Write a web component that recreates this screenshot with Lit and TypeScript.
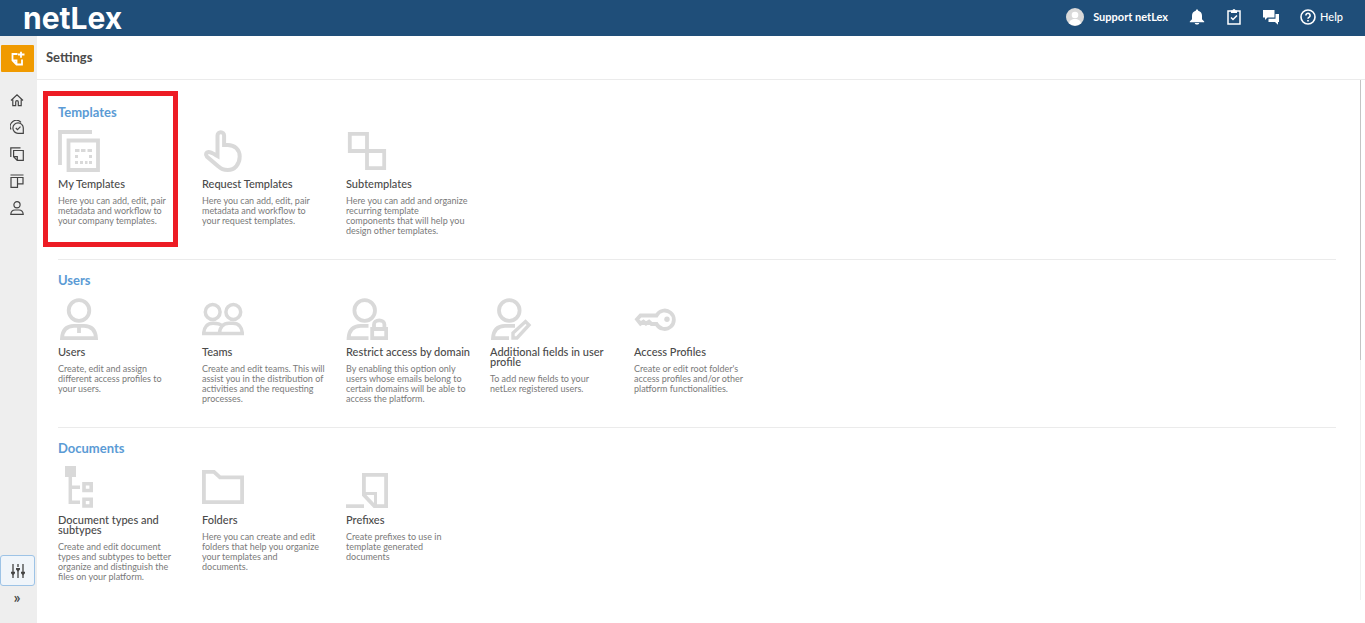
import { LitElement, html, css, svg } from "lit";
import { customElement } from "lit/decorators.js";

interface Card {
  title: string;
  text: string;
  icon: unknown;
}
interface Group {
  name: string;
  cards: Card[];
  marked?: boolean;
}

const cardIcons = {
  templates: svg`<path d="M2 35V2H34"/><path d="M10.500 10.500H40V40H10.500Z"/><path stroke-width="3" d="M17 20.500h4.500M23 20.500h4.500M29.500 20.500H34M17 32.500h3M22 32.500h3M27 32.500h2.500M31 32.500h3M17 26.500h3M31 26.500h3"/>`,
  hand: svg`<path stroke-width="4" d="M15.500 26V5.500a3.200 3.200 0 0 1 6.600 0V15h3.600c7 0 12 4.600 12 11.600 0 7.400-4.800 13.400-12 13.400-4 0-6.800-1-9.300-3.600L4.800 26.500c-1.700-1.900-.6-4.300 1.700-4.500 2.300-.1 5.500 2 9 4z"/>`,
  blocks: svg`<path d="M3.800 3.800H21V21H3.800ZM21 21H38.200V38.200H21Z"/>`,
  user: svg`<circle cx="21" cy="12.500" r="10.300"/><path d="M4 40.200H38C37.500 32 33 27.800 26 27.800H16C9 27.800 4.500 32 4 40.200ZM21 28v7"/>`,
  team: svg`<g stroke-width="3.500"><circle cx="10.700" cy="14" r="7.400"/><circle cx="31.300" cy="14" r="7.400"/><path d="M17 35.400H1.700C2 29 5.500 25.200 11 25.200c5 0 7 .5 9 2.500M17.500 35.400H40.300C40 29 36.500 25.200 31 25.200h-4C21.500 25.200 17.800 29 17.500 35.400Z"/></g>`,
  lock: svg`<circle cx="18.700" cy="12.500" r="10.300"/><path d="M22.500 40.200H2.600C3 32 7.500 27.800 14.500 27.800h8"/><path d="M26.200 31H40.200V40.200H26.200ZM28 30v-3.500a5.200 4.200 0 0 1 10.400 0V30"/>`,
  pencil: svg`<circle cx="19.300" cy="12.500" r="10.300"/><path d="M19 40.200H3C3.500 32 8 27.800 15 27.800h10"/><path stroke-width="3.400" d="M23 40v-5L35.500 23.500 39 27 27 40Z"/>`,
  key: svg`<path stroke-width="3.800" d="M22.500 17.500H6.500L3 21.300l3.500 4.400 3-2 2.500 2 3-2 2.500 2.300h5A9.200 9.200 0 1 0 22.500 17.500Z"/><circle class="solid" cx="33" cy="21.300" r="2.700"/>`,
  tree: svg`<path class="solid" d="M7 0H18V11H7Z"/><path stroke-width="3.500" d="M12.300 10V36.200H22M12.300 21.300H22"/><path stroke-width="3.600" d="M26 17.800H33.200V24.500H26ZM26 33.200H33.200V40H26Z"/>`,
  folder: svg`<path stroke-width="3.800" d="M1.900 5.800H12L18 11.300H40.100V36.200H1.900Z"/>`,
  prefix: svg`<path d="M0 40.200H18"/><path stroke-width="3.800" d="M17.900 8.800H40.100V40.200H28.500L17.900 29Z"/><path stroke-width="3" d="M17 27.500H29.500V40"/>`,
};

// "\n" in a description is a line break on the card.
const groups: Group[] = [
  {
    name: "Templates",
    marked: true,
    cards: [
      { title: "My Templates", text: "Here you can add, edit, pair\nmetadata and workflow to\nyour company templates.", icon: cardIcons.templates },
      { title: "Request Templates", text: "Here you can add, edit, pair\nmetadata and workflow to\nyour request templates.", icon: cardIcons.hand },
      { title: "Subtemplates", text: "Here you can add and organize\nrecurring template\ncomponents that will help you\ndesign other templates.", icon: cardIcons.blocks },
    ],
  },
  {
    name: "Users",
    cards: [
      { title: "Users", text: "Create, edit and assign\ndifferent access profiles to\nyour users.", icon: cardIcons.user },
      { title: "Teams", text: "Create and edit teams. This will\nassist you in the distribution of\nactivities and the requesting\nprocesses.", icon: cardIcons.team },
      { title: "Restrict access by domain", text: "By enabling this option only\nusers whose emails belong to\ncertain domains will be able to\naccess the platform.", icon: cardIcons.lock },
      { title: "Additional fields in user profile", text: "To add new fields to your\nnetLex registered users.", icon: cardIcons.pencil },
      { title: "Access Profiles", text: "Create or edit root folder's\naccess profiles and/or other\nplatform functionalities.", icon: cardIcons.key },
    ],
  },
  {
    name: "Documents",
    cards: [
      { title: "Document types and subtypes", text: "Create and edit document\ntypes and subtypes to better\norganize and distinguish the\nfiles on your platform.", icon: cardIcons.tree },
      { title: "Folders", text: "Here you can create and edit\nfolders that help you organize\nyour templates and\ndocuments.", icon: cardIcons.folder },
      { title: "Prefixes", text: "Create prefixes to use in\ntemplate generated\ndocuments", icon: cardIcons.prefix },
    ],
  },
];

const navIcons = [
  { label: "Home", icon: svg`<path d="M1 7.500 7 1.800l6 5.700M2.800 6.500v6.200h2.900V9a1.300 1.300 0 0 1 2.600 0v3.700h2.900V6.500"/>` },
  { label: "Approvals", icon: svg`<path d="M1 9.500A6.200 6.200 0 0 1 11 2.300M13.300 13.300H8A5.200 5.200 0 1 1 13.300 8ZM5.800 8l1.700 1.600 3-3"/>` },
  { label: "Documents", icon: svg`<path d="M.8 10V.8H10.500M3.600 3.500H13.300V13.300H7.200L3.600 9.700ZM3.600 9.600H7.300V13.200"/>` },
  { label: "Boards", icon: svg`<path d="M.5 1H13.500M1 3.500H7.500V13.300H1ZM7.500 3.500H13V9.800H7.500"/>` },
  { label: "People", icon: svg`<circle cx="7" cy="3.800" r="3.100"/><path d="M.8 13.300C1 10.500 2.500 9 5 9h4c2.500 0 4 1.500 4.200 4.300Z"/>` },
];

@customElement("app-root")
export class AppRoot extends LitElement {
  static styles = css`
    :host {
      display: flex;
      flex-direction: column;
      min-height: 100vh;
      background: #fff;
      color: #4a4a4a;
      font-family: Lato, "Liberation Sans", sans-serif;
    }
    * { box-sizing: border-box; }
    h1, h2, h3, p { margin: 0; }
    a { color: inherit; text-decoration: none; }
    button { border: 0; padding: 0; background: none; font: inherit; color: inherit; }
    svg { display: block; fill: none; stroke: currentColor; }
    .solid { fill: currentColor; stroke: none; }
    .disc { fill: #d9d9d9; stroke: none; }

    .top {
      display: flex;
      align-items: center;
      justify-content: space-between;
      height: 36px;
      padding: 0 22px 0 23px;
      background: #1f4e79;
      color: #fff;
    }
    .logo { font-family: Inter, Lato, sans-serif; font-size: 30px; line-height: 36px; font-weight: 700; }
    .tools { display: flex; align-items: center; gap: 21px; padding-bottom: 3px; font-size: 11px; line-height: 16px; }
    .account { display: flex; align-items: center; gap: 9px; font-weight: 700; }
    .help { display: flex; align-items: center; gap: 4px; font-weight: 500; }

    .body { display: flex; flex: 1; }
    .side {
      display: flex;
      flex-direction: column;
      align-items: center;
      width: 37px;
      padding: 9px 3px 18px 0;
      background: #eee;
      color: #444;
    }
    .create {
      display: grid;
      place-items: center;
      width: 33px;
      height: 27px;
      margin: 0 0 21px 1px;
      border-radius: 1px;
      background: #f09a00;
      color: #fff;
    }
    .nav { display: flex; flex-direction: column; gap: 13px; flex: 1; }
    .nav a { display: block; }
    .config {
      display: grid;
      place-items: center;
      width: 35px;
      height: 31px;
      padding-left: 2px;
      border: 1px solid #9dc3e6;
      border-radius: 3px;
      background: #f0f5fa;
      margin-bottom: 3px;
    }
    .more { font-size: 16px; line-height: 16px; font-weight: 600; }

    .main { flex: 1; min-width: 0; display: flex; flex-direction: column; }
    .title {
      height: 44px;
      padding: 0 9px;
      border-bottom: 1px solid #ebebeb;
      font-size: 13px;
      line-height: 42px;
      font-weight: 700;
    }
    .scroll { display: flex; flex: 1; margin-bottom: 23px; padding-right: 4px; }
    .groups { flex: 1; padding: 12px 24px 0 21px; }
    .rail { width: 1px; background: #f0f0f0; }
    .thumb { height: 280px; background: #c4c4c4; }

    .group { position: relative; padding: 11px 0 23px; border-bottom: 1px solid #ebebeb; }
    .group:last-child { border-bottom: 0; padding-bottom: 0; }
    .name { margin-bottom: 9px; font-size: 13px; line-height: 18px; font-weight: 700; color: #5b9bd5; }
    .cards { display: flex; flex-wrap: wrap; gap: 16px; }
    .card { display: block; width: 128px; }
    .art { width: 42px; height: 42px; margin-bottom: 7px; color: #d9d9d9; stroke-width: 3.800; }
    .card h3 { margin-bottom: 7px; font-size: 11px; line-height: 10px; font-weight: 500; }
    .card p { font-size: 9px; line-height: 10px; white-space: pre-line; color: #7a7a7a; }
    .mark {
      position: absolute;
      top: -1px;
      left: -15px;
      width: 135px;
      height: 156px;
      border: 5px solid #ed1c24;
      pointer-events: none;
    }
  `;

  render() {
    return html`
      <header class="top">
        <a class="logo" href="#">netLex</a>
        <div class="tools">
          <a class="account" href="#account">
            <svg width="18" height="18" viewBox="0 0 18 18"><circle class="disc" cx="9" cy="9" r="9"/><circle class="solid" cx="9" cy="7" r="3.300"/><path class="solid" d="M3.200 15.500c0-3 2.500-4.500 5.800-4.500s5.800 1.500 5.800 4.500a9 9 0 0 1-11.600 0Z"/></svg>
            <span>Support netLex</span>
          </a>
          <button aria-label="Notifications"><svg width="16" height="16" viewBox="0 0 16 16"><path class="solid" d="M8 0.500c.8 0 1.200.5 1.200 1.200 2.500.6 3.800 2.400 3.800 5v3.600l2.200 2.200v.8H.8v-.8L3 10.300V6.700c0-2.600 1.300-4.400 3.800-5C6.800 1 7.200.5 8 .5ZM5.700 14h4.600c-.3 1-1.200 1.600-2.300 1.600S6 15 5.700 14Z"/></svg></button>
          <button aria-label="Tasks"><svg width="16" height="16" viewBox="0 0 16 16" stroke-width="1.500"><path d="M2 2H14V15H2ZM5 8.500l2 2 4-4"/><path class="solid" d="M5 1.500h1.500a1.500 1.500 0 0 1 3 0H11V4H5Z"/></svg></button>
          <button aria-label="Chat"><svg width="16" height="16" viewBox="0 0 16 16"><path class="solid" d="M0 1H11.500V8.500H4.500L2 11V8.500H0ZM12.500 5H16V13H15V15.800L12 13H5.500V9.800H12.500Z"/></svg></button>
          <a class="help" href="#help">
            <svg width="16" height="16" viewBox="0 0 16 16" stroke-width="1.600"><circle cx="8" cy="8" r="7"/><path d="M5.900 6.500a2.100 2.100 0 1 1 3.300 1.600C8.400 8.600 8 8.900 8 9.800M8 11v1.600"/></svg>
            <span>Help</span>
          </a>
        </div>
      </header>
      <div class="body">
        <aside class="side">
          <button class="create" aria-label="New document">
            <svg width="16" height="16" viewBox="0 0 16 16" stroke-width="1.800"><path d="M7.500 3H2.500V9.500L6.500 13.500H12V8.500M2.500 9.500H6.500V13.500M11 .800V6.800M8 3.500H14.500"/></svg>
          </button>
          <nav class="nav">
            ${navIcons.map(
              (n) => html`<a href="#" aria-label=${n.label}><svg width="14" height="14" viewBox="0 0 14 14" stroke-width="1.200">${n.icon}</svg></a>`
            )}
          </nav>
          <button class="config" aria-label="Settings">
            <svg width="14" height="14" viewBox="0 0 14 14" stroke-width="1.300"><path d="M2 0V8M2 10.500V14M7 0V3M7 6V14M12 0V8M12 10.500V14"/><path class="solid" d="M0 7.800H4V9.300L2 11.500 0 9.300ZM5 4H9V5.500L7 7.700 5 5.500ZM10 7.800H14V9.300L12 11.500 10 9.300Z"/></svg>
          </button>
          <button class="more" aria-label="Expand menu">»</button>
        </aside>
        <main class="main">
          <h1 class="title">Settings</h1>
          <div class="scroll">
            <div class="groups">
              ${groups.map(
                (g) => html`<section class="group">
                  <h2 class="name">${g.name}</h2>
                  <div class="cards">
                    ${g.cards.map(
                      (c) => html`<a class="card" href="#">
                        <svg class="art" viewBox="0 0 42 42">${c.icon}</svg>
                        <h3>${c.title}</h3>
                        <p>${c.text}</p>
                      </a>`
                    )}
                  </div>
                  ${g.marked ? html`<div class="mark"></div>` : null}
                </section>`
              )}
            </div>
            <div class="rail"><div class="thumb"></div></div>
          </div>
        </main>
      </div>
    `;
  }
}
